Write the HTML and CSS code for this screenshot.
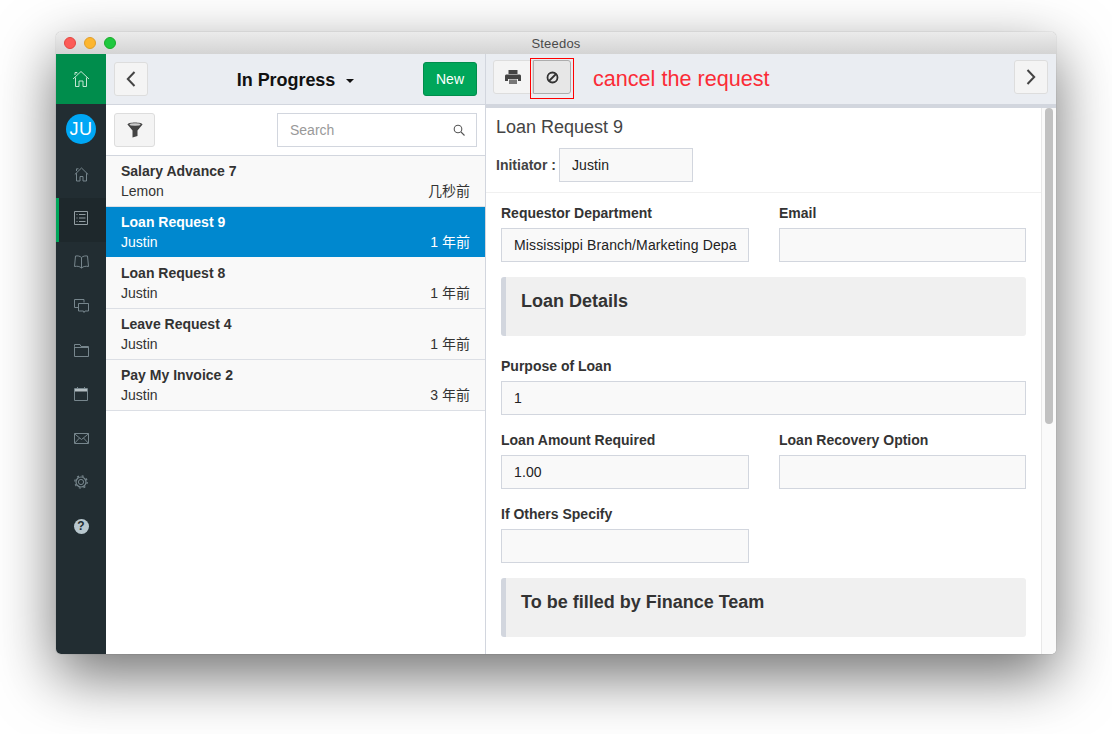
FILE: index.html
```html
<!DOCTYPE html>
<html>
<head>
  <title>Steedos</title>
  <meta charset="utf-8">
  <link rel="stylesheet" href="styles.css">
</head>
<body>
  <div class="window">
    <div class="titlebar">
      <span class="light red"></span><span class="light amber"></span><span class="light green"></span>
      <div class="title">Steedos</div>
    </div>
    <div class="app">
      <nav class="sidebar">
        <div class="brand">
          <svg width="18" height="18" viewBox="0 0 18 18" fill="none" stroke="#c4e6d3" stroke-width="1"><path d="M1 9 9 1.500 17 9M3.500 7.500V16.500H7V11H11V16.500H14.500V7.500M3 5V2.500H5V3.500"/></svg>
        </div>
        <div class="avatar">JU</div>
        <div class="nav-item">
          <svg width="15" height="15" viewBox="0 0 15 15" fill="none" stroke="#77868d"><path d="M.8 7.500 7.500 1l6.700 6.500M2.500 6.200V14H6V9.500h3V14h3.500V6.200M2.500 4V1.800h2"/></svg>
        </div>
        <div class="nav-item active">
          <svg width="14" height="14" viewBox="0 0 14 14" fill="none" stroke="#929da2"><path d="M.5.5h13v13H.5zM2.500 3.500h1M5 3.500h6.500M2.500 7h1M5 7h6.500M2.500 10.500h1M5 10.500h6.500"/></svg>
        </div>
        <div class="nav-item">
          <svg width="15" height="14" viewBox="0 0 15 14" fill="none" stroke="#77868d"><path d="M7.500 2.500C6 1 3.500.7 1.500 1L.5 11.500c2.500-.5 5-.3 7 1.500 2-1.800 4.500-2 7-1.500L13.500 1c-2-.3-4.500 0-6 1.500zM7.500 2.500V13"/></svg>
        </div>
        <div class="nav-item">
          <svg width="15" height="15" viewBox="0 0 15 15" fill="none" stroke="#77868d"><path d="M10 3.500V.5H.5V8.500H4.500M4.500 4.500H14.500V12H11L10 13.500 9.500 12H4.500z"/></svg>
        </div>
        <div class="nav-item">
          <svg width="15" height="13" viewBox="0 0 15 13" fill="none" stroke="#77868d"><path d="M.5 2.500V12.500H14.500V2.500H7L6 .5H.5zM.5 3.500H14.500"/></svg>
        </div>
        <div class="nav-item">
          <svg width="14" height="14" viewBox="0 0 14 14" fill="none" stroke="#77868d"><path d="M.5 1.500H13.500V13.500H.5z"/><path d="M1 2H13V4.500H1z" fill="#b5bfc3" stroke="none"/><path d="M3.500 0V2M10.500 0V2"/></svg>
        </div>
        <div class="nav-item">
          <svg width="15" height="11" viewBox="0 0 15 11" fill="none" stroke="#77868d"><path d="M.5.5H14.500V10.500H.5zM.5.8 7.500 6.500 14.500.8M.8 10 5.500 5M14.200 10 9.500 5"/></svg>
        </div>
        <div class="nav-item">
          <svg width="14" height="14" viewBox="0 0 14 14" fill="none" stroke="#77868d"><circle cx="7" cy="7" r="2.600"/><circle cx="7" cy="7" r="5" stroke-width="1.200"/><circle cx="7" cy="7" r="6.200" stroke-width="1.200" stroke-dasharray="2 2.870"/></svg>
        </div>
        <div class="nav-item">
          <div class="help">?</div>
        </div>
      </nav>

      <section class="list-pane">
        <header class="bar list-bar">
          <button class="btn square">
            <svg width="10" height="16" viewBox="0 0 10 16" fill="none" stroke="#444" stroke-width="2"><path d="M8.500 1 1.800 8l6.700 7"/></svg>
          </button>
          <div class="bar-title">In Progress <span class="caret"></span></div>
          <button class="btn-new">New</button>
        </header>
        <div class="search-row">
          <button class="btn filter">
            <svg width="16" height="16" viewBox="0 0 16 16"><path d="M.5 2.500C.5-.3 15.500-.3 15.500 2.500L10.500 8.500V14L5.500 15.500V8.500z" fill="#444"/><ellipse cx="8" cy="2.500" rx="5.500" ry="1.200" fill="#ccc"/></svg>
          </button>
          <div class="search">
            <span>Search</span>
            <svg width="12" height="12" viewBox="0 0 12 12" fill="none" stroke="#555" stroke-width="1.100"><circle cx="5" cy="5" r="3.800"/><path d="M8 8l3.500 3.500"/></svg>
          </div>
        </div>
        <ul class="items">
          <li class="item"><b>Salary Advance 7</b><div class="row"><span>Lemon</span><span>几秒前</span></div></li>
          <li class="item selected"><b>Loan Request 9</b><div class="row"><span>Justin</span><span>1 年前</span></div></li>
          <li class="item"><b>Loan Request 8</b><div class="row"><span>Justin</span><span>1 年前</span></div></li>
          <li class="item"><b>Leave Request 4</b><div class="row"><span>Justin</span><span>1 年前</span></div></li>
          <li class="item"><b>Pay My Invoice 2</b><div class="row"><span>Justin</span><span>3 年前</span></div></li>
        </ul>
      </section>

      <section class="detail-pane">
        <header class="bar detail-bar">
          <div class="btn-group">
            <button class="btn tool">
              <svg width="16" height="14" viewBox="0 0 16 14"><path d="M3.500 0H12.500V4H3.500z" fill="#444"/><path d="M0 6C0 4.500 1 4.500 2 4.500H14C15 4.500 16 4.500 16 6V11H13V9H3V11H0z" fill="#444"/><path d="M4 9.500H12V14H4z" fill="#777"/></svg>
            </button>
            <button class="btn tool pressed">
              <svg width="13" height="13" viewBox="0 0 13 13" fill="none" stroke="#333" stroke-width="1.800"><circle cx="6.500" cy="6.500" r="5"/><path d="M3 10 10 3"/></svg>
            </button>
          </div>
          <div class="note">cancel the request</div>
          <button class="btn square next">
            <svg width="10" height="16" viewBox="0 0 10 16" fill="none" stroke="#444" stroke-width="2"><path d="M1.500 1 8.200 8l-6.700 7"/></svg>
          </button>
          <div class="red-box"></div>
        </header>
        <div class="detail-body">
          <div class="form-scroll">
            <div class="form-head">
              <h2>Loan Request 9</h2>
              <div class="initiator"><b>Initiator :</b><div class="field short">Justin</div></div>
            </div>
            <div class="form">
              <div class="grid">
                <div class="group"><label>Requestor Department</label><div class="field">Mississippi Branch/Marketing Depa</div></div>
                <div class="group"><label>Email</label><div class="field"></div></div>
              </div>
              <div class="section">Loan Details</div>
              <div class="group wide"><label>Purpose of Loan</label><div class="field">1</div></div>
              <div class="grid">
                <div class="group"><label>Loan Amount Required</label><div class="field">1.00</div></div>
                <div class="group"><label>Loan Recovery Option</label><div class="field"></div></div>
              </div>
              <div class="grid">
                <div class="group"><label>If Others Specify</label><div class="field"></div></div>
              </div>
              <div class="section">To be filled by Finance Team</div>
            </div>
          </div>
          <div class="scrollbar"><div class="thumb"></div></div>
        </div>
      </section>
    </div>
  </div>
</body>
</html>
```

FILE: styles.css
```css
html, body {
  margin: 0;
  height: 734px;
  overflow: hidden;
  background: #fff;
}
body {
  font-family: "Liberation Sans", "Noto Sans CJK SC", sans-serif;
  font-size: 14px;
  color: #333;
  padding: 32px 56px 0;
  box-sizing: border-box;
}
body::before {
  content: "";
  position: absolute;
  left: 56px;
  top: 32px;
  width: 1000px;
  height: 622px;
  border-radius: 5px;
  box-shadow: 0 0 1px rgba(0, 0, 0, .45), 0 22px 60px rgba(0, 0, 0, .56);
}
.window {
  position: relative;
  width: 1000px;
  height: 622px;
  border-radius: 5px;
  overflow: hidden;
  display: flex;
  flex-direction: column;
}
.titlebar {
  height: 22px;
  flex: none;
  background: linear-gradient(#ebebeb, #d4d4d4);
  display: flex;
  align-items: center;
  padding-left: 8px;
  gap: 8px;
  position: relative;
}
.light {
  width: 12px;
  height: 12px;
  border-radius: 50%;
  box-sizing: border-box;
}
.red { background: #fc5b57; border: 1px solid #e24640; }
.amber { background: #fdb62f; border: 1px solid #e09e2b; }
.green { background: #1fc83f; border: 1px solid #1aab29; }
.title {
  position: absolute;
  left: 0;
  right: 0;
  text-align: center;
  font-size: 13px;
  letter-spacing: .2px;
  color: #4a4a4a;
}
.app {
  flex: 1;
  display: flex;
  min-height: 0;
  background: #fff;
}

/* sidebar */
.sidebar {
  width: 50px;
  flex: none;
  background: #222d32;
  display: flex;
  flex-direction: column;
  align-items: center;
}
.brand {
  width: 100%;
  height: 50px;
  background: #008d4c;
  display: flex;
  align-items: center;
  justify-content: center;
}
.avatar {
  width: 30px;
  height: 30px;
  margin: 10px 0;
  border-radius: 50%;
  background: #00a7f5;
  color: #fff;
  font-size: 18px;
  line-height: 30px;
  text-align: center;
  letter-spacing: .5px;
}
.nav-item {
  width: 100%;
  height: 44px;
  flex: none;
  padding-bottom: 4px;
  display: flex;
  align-items: center;
  justify-content: center;
  box-sizing: border-box;
}
.nav-item.active {
  background: #1e282c;
  border-left: 3px solid #00a65a;
  padding-right: 3px;
}
.help {
  width: 15px;
  height: 15px;
  border-radius: 50%;
  background: #b8c7ce;
  color: #222d32;
  font-size: 12px;
  font-weight: bold;
  line-height: 15px;
  text-align: center;
}

/* shared bars and buttons */
.bar {
  height: 50px;
  flex: none;
  background: #eaedf2;
  display: flex;
  align-items: center;
  box-sizing: border-box;
  position: relative;
}
.btn {
  background: #f4f4f4;
  border: 1px solid #ddd;
  border-radius: 3px;
  padding: 0;
  display: flex;
  align-items: center;
  justify-content: center;
}
.square {
  width: 34px;
  height: 34px;
}

/* list pane */
.list-pane {
  width: 380px;
  flex: none;
  border-right: 1px solid #d2d6de;
  box-sizing: border-box;
  display: flex;
  flex-direction: column;
}
.list-bar {
  padding: 0 8px;
  justify-content: space-between;
  height: 51px;
  border-bottom: 1px solid #d2d6de;
}
.bar-title {
  font-size: 18px;
  letter-spacing: -.05px;
  font-weight: bold;
  color: #111;
  margin: 2px 0 0 20px;
}
.caret {
  display: inline-block;
  margin-left: 6px;
  vertical-align: middle;
  border-top: 4px solid #111;
  border-left: 4px solid transparent;
  border-right: 4px solid transparent;
}
.btn-new {
  width: 54px;
  height: 34px;
  background: #00a65a;
  border: 1px solid #008d4c;
  border-radius: 3px;
  color: #fff;
  font: 14px "Liberation Sans", sans-serif;
  padding: 0;
}
.search-row {
  height: 51px;
  flex: none;
  box-sizing: border-box;
  border-bottom: 1px solid #d2d6de;
  padding: 8px;
  display: flex;
  align-items: flex-start;
  justify-content: space-between;
}
.filter {
  width: 41px;
  height: 34px;
}
.search {
  width: 200px;
  height: 34px;
  box-sizing: border-box;
  border: 1px solid #d2d6de;
  padding: 0 11px 0 12px;
  display: flex;
  align-items: center;
  justify-content: space-between;
  color: #999;
}
.items {
  list-style: none;
  margin: 0;
  padding: 0;
}
.item {
  height: 51px;
  box-sizing: border-box;
  padding: 5px 15px 0;
  background: #f9f9f9;
  border-bottom: 1px solid #dcdfe5;
  line-height: 20px;
}
.item .row {
  display: flex;
  justify-content: space-between;
}
.item.selected {
  background: #0088cf;
  color: #fff;
  border-bottom-color: #f9f9f9;
}

/* detail pane */
.detail-pane {
  flex: 1;
  min-width: 0;
  display: flex;
  flex-direction: column;
}
.detail-bar {
  height: 54px;
  padding: 0 8px 4px 7px;
  border-bottom: 4px solid #d2d6de;
}
.btn-group {
  display: flex;
}
.tool {
  width: 40px;
  height: 34px;
  border-radius: 3px 0 0 3px;
}
.pressed {
  width: 38px;
  background: #e7e7e7;
  border: 1px solid #adadad;
  border-radius: 0 3px 3px 0;
}
.note {
  margin: 4px 0 0 22px;
  font-size: 21.600px;
  color: #fb2b36;
}
.next {
  margin-left: auto;
}
.red-box {
  position: absolute;
  left: 44px;
  top: 4px;
  width: 44px;
  height: 41px;
  box-sizing: border-box;
  border: 1px solid #f00;
}
.detail-body {
  flex: 1;
  min-height: 0;
  display: flex;
}
.form-scroll {
  flex: 1;
  min-width: 0;
  overflow: hidden;
}
.form-head {
  height: 85px;
  box-sizing: border-box;
  padding: 8px 10px 0;
  border-bottom: 1px solid #f0f0f0;
}
h2 {
  margin: 0 0 10px;
  font-size: 18px;
  font-weight: normal;
  line-height: 22px;
  color: #444;
}
.initiator {
  display: flex;
  align-items: center;
  gap: 3px;
  color: #444;
}
.form {
  padding: 10px 15px 0;
}
.grid {
  display: grid;
  grid-template-columns: 248px 247px;
  column-gap: 30px;
}
.group {
  margin-bottom: 15px;
}
.group label {
  display: block;
  font-weight: bold;
  line-height: 20px;
  margin-bottom: 5px;
}
.field {
  height: 34px;
  box-sizing: border-box;
  border: 1px solid #d2d6de;
  background: #f9f9f9;
  padding: 0 12px;
  line-height: 33px;
  letter-spacing: .12px;
  color: #222;
  white-space: nowrap;
  overflow: hidden;
}
.short {
  width: 134px;
}
.section {
  height: 59px;
  box-sizing: border-box;
  background: #f0f0f0;
  border-left: 5px solid #d2d6de;
  border-radius: 3px;
  padding: 13px 15px;
  font-size: 18px;
  font-weight: bold;
  line-height: 22px;
  margin-bottom: 20px;
}
.scrollbar {
  width: 15px;
  flex: none;
  background: #fafafa;
  border-left: 1px solid #e8e8e8;
  box-sizing: border-box;
  padding: 0 3px;
}
.thumb {
  width: 8px;
  height: 316px;
  background: #c1c1c1;
  border-radius: 4px;
}
```
